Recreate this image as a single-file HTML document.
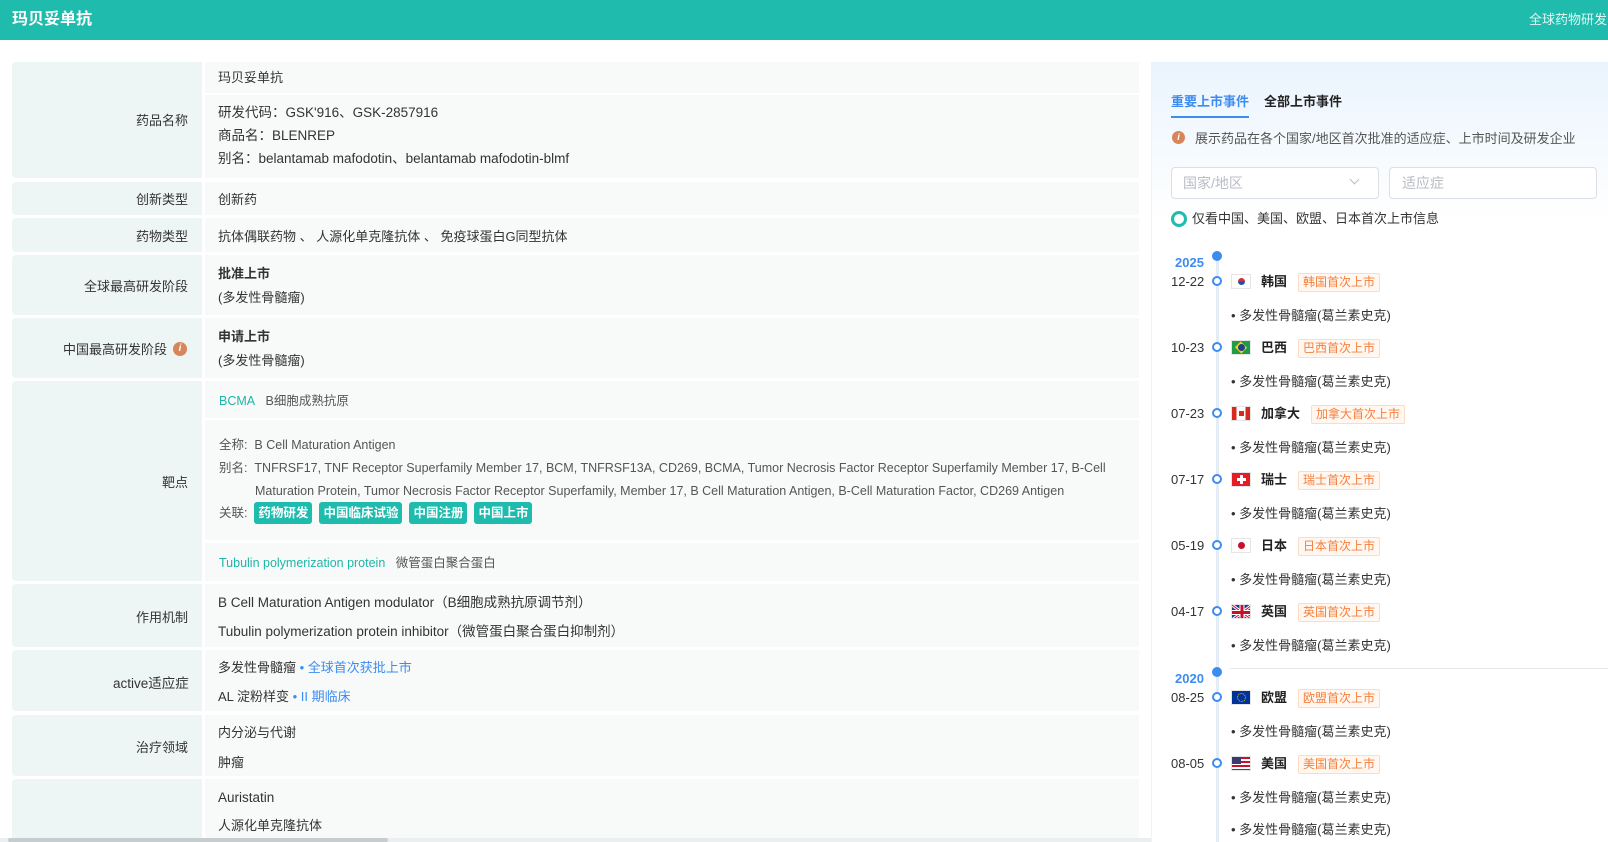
<!DOCTYPE html>
<html><head><meta charset="utf-8"><style>
*{margin:0;padding:0;box-sizing:border-box}
body{width:1608px;height:842px;overflow:hidden;background:#fff;font-family:"Liberation Sans","Noto Sans CJK SC",sans-serif;color:#333;font-size:13px;position:relative;line-height:1.15}
.hd{position:absolute;left:0;top:0;width:1608px;height:40px;background:#1fbcad}
.hd .t{position:absolute;left:12px;top:11px;color:#fff;font-weight:bold;font-size:16px}
.hd .r{position:absolute;left:1529px;top:13px;color:#dff7f4;font-size:13px;white-space:nowrap}
.a{position:absolute;white-space:nowrap}
.lb{position:absolute;left:12px;width:190px;background:#eef6f5;border-radius:4px 0 0 4px}
.vl{position:absolute;left:205px;width:934px;background:#f8fafa}
.tg{display:inline-block;background:#1fbcad;color:#fff;font-weight:bold;padding:0 4px;border-radius:3px;height:22px;line-height:22px;margin-right:7px}
.teal{color:#1fb5a7}
.blue{color:#3d8cf0}
.panel{position:absolute;left:1151px;top:62px;width:457px;height:780px;background:linear-gradient(#eaf4fd,#fff 160px);border-left:1px solid #f0f2f5}
.dt{position:absolute;left:1171px;font-size:13px;color:#333}
.dot{position:absolute;left:1212px;width:10px;height:10px;border:2.5px solid #3d8cf0;border-radius:50%;background:#fff}
.big{position:absolute;left:1212px;width:10px;height:10px;border-radius:50%;background:#3d8cf0}
.flag{position:absolute;left:1231px;width:20px;height:15px;border:1px solid #e5e5e5;overflow:hidden}
.cn{position:absolute;left:1261px;font-weight:bold;color:#222}
.tag{position:absolute;left:1298px;height:19px;line-height:17px;border:1px solid #fcdcc4;background:#fff7f0;color:#f5803e;font-size:12px;padding:0 4px;border-radius:2px}
.bl{position:absolute;left:1231px;color:#333}
.yr{position:absolute;left:1175px;color:#3d8cf0;font-weight:bold;font-size:13px}
</style></head><body>
<div class="hd"><div class="t">玛贝妥单抗</div><div class="r">全球药物研发</div></div>

<div class="lb" style="top:62px;height:116px"></div><div class="a" style="top:114px;left:136px">药品名称</div>
<div class="vl" style="top:62px;height:31px"></div>
<div class="a" style="left:218px;top:71px">玛贝妥单抗</div>
<div class="vl" style="top:95px;height:83px"></div>
<div class="a" style="left:218px;top:105px;font-size:13.5px">研发代码：GSK'916、GSK-2857916</div>
<div class="a" style="left:218px;top:128px;font-size:13.5px">商品名：BLENREP</div>
<div class="a" style="left:218px;top:151px;font-size:13.5px">别名：belantamab mafodotin、belantamab mafodotin-blmf</div>

<div class="lb" style="top:182px;height:33px"></div><div class="a" style="left:136px;top:193px">创新类型</div>
<div class="vl" style="top:182px;height:33px"></div><div class="a" style="left:218px;top:193px">创新药</div>

<div class="lb" style="top:218px;height:34px"></div><div class="a" style="left:136px;top:230px">药物类型</div>
<div class="vl" style="top:218px;height:34px"></div><div class="a" style="left:218px;top:230px">抗体偶联药物 、 人源化单克隆抗体 、 免疫球蛋白G同型抗体</div>

<div class="lb" style="top:255px;height:60px"></div><div class="a" style="left:84px;top:280px">全球最高研发阶段</div>
<div class="vl" style="top:255px;height:60px"></div>
<div class="a" style="left:218px;top:267px;font-weight:bold">批准上市</div>
<div class="a" style="left:218px;top:291px">(多发性骨髓瘤)</div>

<div class="lb" style="top:318px;height:60px"></div><div class="a" style="left:63px;top:343px">中国最高研发阶段</div>
<div class="a" style="left:173px;top:342px;width:14px;height:14px;border-radius:50%;background:#d9855a;color:#fff;font-size:10px;font-style:italic;font-weight:bold;text-align:center;line-height:14px">i</div>
<div class="vl" style="top:318px;height:60px"></div>
<div class="a" style="left:218px;top:330px;font-weight:bold">申请上市</div>
<div class="a" style="left:218px;top:354px">(多发性骨髓瘤)</div>

<div class="lb" style="top:381px;height:200px"></div><div class="a" style="left:162px;top:476px">靶点</div>
<div class="vl" style="top:381px;height:37px"></div>
<div class="a" style="left:219px;top:394px;font-size:12.5px"><span class="teal">BCMA</span>&nbsp;&nbsp;&nbsp;<span style="color:#555">B细胞成熟抗原</span></div>
<div class="vl" style="top:420px;height:120px"></div>
<div class="a" style="left:219px;top:438px;font-size:12.5px;color:#555">全称:&nbsp; B Cell Maturation Antigen</div>
<div class="a" style="left:219px;top:461px;font-size:12.5px;color:#555">别名:&nbsp; TNFRSF17, TNF Receptor Superfamily Member 17, BCM, TNFRSF13A, CD269, BCMA, Tumor Necrosis Factor Receptor Superfamily Member 17, B-Cell</div>
<div class="a" style="left:255px;top:484px;font-size:12.5px;color:#555">Maturation Protein, Tumor Necrosis Factor Receptor Superfamily, Member 17, B Cell Maturation Antigen, B-Cell Maturation Factor, CD269 Antigen</div>
<div class="a" style="left:219px;top:502px;font-size:12.5px;color:#555;line-height:22px">关联:&nbsp; <span class="tg">药物研发</span><span class="tg">中国临床试验</span><span class="tg">中国注册</span><span class="tg">中国上市</span></div>
<div class="vl" style="top:543px;height:38px"></div>
<div class="a" style="left:219px;top:556px;font-size:12.5px"><span class="teal">Tubulin polymerization protein</span>&nbsp;&nbsp;&nbsp;<span style="color:#555">微管蛋白聚合蛋白</span></div>

<div class="lb" style="top:584px;height:63px"></div><div class="a" style="left:136px;top:611px">作用机制</div>
<div class="vl" style="top:584px;height:63px"></div>
<div class="a" style="left:218px;top:595px;font-size:13.5px">B Cell Maturation Antigen modulator（B细胞成熟抗原调节剂）</div>
<div class="a" style="left:218px;top:624px;font-size:13.5px">Tubulin polymerization protein inhibitor（微管蛋白聚合蛋白抑制剂）</div>

<div class="lb" style="top:650px;height:61px"></div><div class="a" style="left:113px;top:676px;font-size:13.5px">active适应症</div>
<div class="vl" style="top:650px;height:61px"></div>
<div class="a" style="left:218px;top:661px">多发性骨髓瘤<span class="blue"> • 全球首次获批上市</span></div>
<div class="a" style="left:218px;top:690px">AL 淀粉样变<span class="blue"> • II 期临床</span></div>

<div class="lb" style="top:715px;height:61px"></div><div class="a" style="left:136px;top:741px">治疗领域</div>
<div class="vl" style="top:715px;height:61px"></div>
<div class="a" style="left:218px;top:726px">内分泌与代谢</div>
<div class="a" style="left:218px;top:756px">肿瘤</div>

<div class="lb" style="top:779px;height:63px"></div>
<div class="vl" style="top:779px;height:63px"></div>
<div class="a" style="left:218px;top:790px;font-size:13.5px">Auristatin</div>
<div class="a" style="left:218px;top:819px">人源化单克隆抗体</div>
<div class="a" style="left:0;top:838px;width:1608px;height:4px;background:#eceff1"></div>
<div class="a" style="left:8px;top:838px;width:380px;height:4px;background:#c6cdd1;border-radius:2px"></div>

<div class="panel"></div>
<div class="a" style="left:1171px;top:95px;color:#3d8cf0;font-weight:bold">重要上市事件</div>
<div class="a" style="left:1171px;top:116px;width:78px;height:2px;background:#3d8cf0"></div>
<div class="a" style="left:1264px;top:95px;color:#222;font-weight:bold">全部上市事件</div>
<div class="a" style="left:1172px;top:131px;width:13px;height:13px;border-radius:50%;background:#d9855a;color:#fff;font-size:9px;font-style:italic;font-weight:bold;text-align:center;line-height:13px">i</div>
<div class="a" style="left:1195px;top:132px;color:#555">展示药品在各个国家/地区首次批准的适应症、上市时间及研发企业</div>
<div class="a" style="left:1171px;top:167px;width:208px;height:32px;border:1px solid #dcdfe6;border-radius:4px;background:#fff"></div>
<div class="a" style="left:1183px;top:175px;color:#b8bcc4;font-size:14px">国家/地区</div>
<div class="a" style="left:1351px;top:176px;width:7px;height:7px;border-right:1px solid #b8bcc4;border-bottom:1px solid #b8bcc4;transform:rotate(45deg)"></div>
<div class="a" style="left:1389px;top:167px;width:208px;height:32px;border:1px solid #dcdfe6;border-radius:4px;background:#fff"></div>
<div class="a" style="left:1402px;top:175px;color:#b8bcc4;font-size:14px">适应症</div>
<div class="a" style="left:1171px;top:211px;width:16px;height:16px;border:3px solid #1fbcad;border-radius:50%"></div>
<div class="a" style="left:1192px;top:212px;color:#333">仅看中国、美国、欧盟、日本首次上市信息</div>

<div class="a" style="left:1216px;top:258px;width:3px;height:584px;background:#e3ecf7"></div>
<div class="big" style="top:251px"></div><div class="yr" style="top:256px">2025</div>
<div class="a" style="left:1230px;top:668px;width:378px;height:1px;background:#e6e8eb"></div>
<div class="big" style="top:667px"></div><div class="yr" style="top:672px">2020</div>

<div class="dt" style="top:275px">12-22</div><div class="dot" style="top:276px"></div>
<div class="flag" style="top:274px;background:#fff"><div style="position:absolute;left:6px;top:3px;width:7px;height:7px;border-radius:50%;background:linear-gradient(#d32f3a 50%,#1f4fa0 50%)"></div></div>
<div class="cn" style="top:275px">韩国</div><div class="tag" style="top:273px">韩国首次上市</div>
<div class="bl" style="top:309px">• 多发性骨髓瘤(葛兰素史克)</div>

<div class="dt" style="top:341px">10-23</div><div class="dot" style="top:342px"></div>
<div class="flag" style="top:340px;background:#1e9c48"><div style="position:absolute;left:3px;top:1px;width:12px;height:11px;background:#f7d117;transform:rotate(45deg) scale(.75)"></div><div style="position:absolute;left:6px;top:3px;width:7px;height:7px;border-radius:50%;background:#1f3f8f"></div></div>
<div class="cn" style="top:341px">巴西</div><div class="tag" style="top:339px">巴西首次上市</div>
<div class="bl" style="top:375px">• 多发性骨髓瘤(葛兰素史克)</div>

<div class="dt" style="top:407px">07-23</div><div class="dot" style="top:408px"></div>
<div class="flag" style="top:406px;background:linear-gradient(90deg,#d52b1e 25%,#fff 25%,#fff 75%,#d52b1e 75%)"><div style="position:absolute;left:7px;top:4px;width:5px;height:5px;background:#d52b1e"></div></div>
<div class="cn" style="top:407px">加拿大</div><div class="tag" style="top:405px;left:1311px">加拿大首次上市</div>
<div class="bl" style="top:441px">• 多发性骨髓瘤(葛兰素史克)</div>

<div class="dt" style="top:473px">07-17</div><div class="dot" style="top:474px"></div>
<div class="flag" style="top:472px;background:#e41e26"><div style="position:absolute;left:8px;top:2px;width:3px;height:9px;background:#fff"></div><div style="position:absolute;left:5px;top:5px;width:9px;height:3px;background:#fff"></div></div>
<div class="cn" style="top:473px">瑞士</div><div class="tag" style="top:471px">瑞士首次上市</div>
<div class="bl" style="top:507px">• 多发性骨髓瘤(葛兰素史克)</div>

<div class="dt" style="top:539px">05-19</div><div class="dot" style="top:540px"></div>
<div class="flag" style="top:538px;background:#fff"><div style="position:absolute;left:6px;top:3px;width:7px;height:7px;border-radius:50%;background:#c8102e"></div></div>
<div class="cn" style="top:539px">日本</div><div class="tag" style="top:537px">日本首次上市</div>
<div class="bl" style="top:573px">• 多发性骨髓瘤(葛兰素史克)</div>

<div class="dt" style="top:605px">04-17</div><div class="dot" style="top:606px"></div>
<div class="flag" style="top:604px;background:#1f3b8a"><svg width="20" height="15" style="position:absolute;left:0;top:0"><path d="M0 0L20 15M20 0L0 15" stroke="#fff" stroke-width="3"/><path d="M0 0L20 15M20 0L0 15" stroke="#c8102e" stroke-width="1"/><path d="M10 0V15M0 7.5H20" stroke="#fff" stroke-width="5"/><path d="M10 0V15M0 7.5H20" stroke="#c8102e" stroke-width="3"/></svg></div>
<div class="cn" style="top:605px">英国</div><div class="tag" style="top:603px">英国首次上市</div>
<div class="bl" style="top:639px">• 多发性骨髓瘤(葛兰素史克)</div>

<div class="dt" style="top:691px">08-25</div><div class="dot" style="top:692px"></div>
<div class="flag" style="top:690px;background:#003399"><div style="position:absolute;left:5px;top:2px;width:9px;height:9px;border-radius:50%;border:1.5px dotted #ffcc00"></div></div>
<div class="cn" style="top:691px">欧盟</div><div class="tag" style="top:689px">欧盟首次上市</div>
<div class="bl" style="top:725px">• 多发性骨髓瘤(葛兰素史克)</div>

<div class="dt" style="top:757px">08-05</div><div class="dot" style="top:758px"></div>
<div class="flag" style="top:756px;background:repeating-linear-gradient(#c8102e 0 2px,#fff 2px 4px)"><div style="position:absolute;left:0;top:0;width:9px;height:7px;background:#3c3b6e"></div></div>
<div class="cn" style="top:757px">美国</div><div class="tag" style="top:755px">美国首次上市</div>
<div class="bl" style="top:791px">• 多发性骨髓瘤(葛兰素史克)</div>
<div class="bl" style="top:823px">• 多发性骨髓瘤(葛兰素史克)</div>
</body></html>
